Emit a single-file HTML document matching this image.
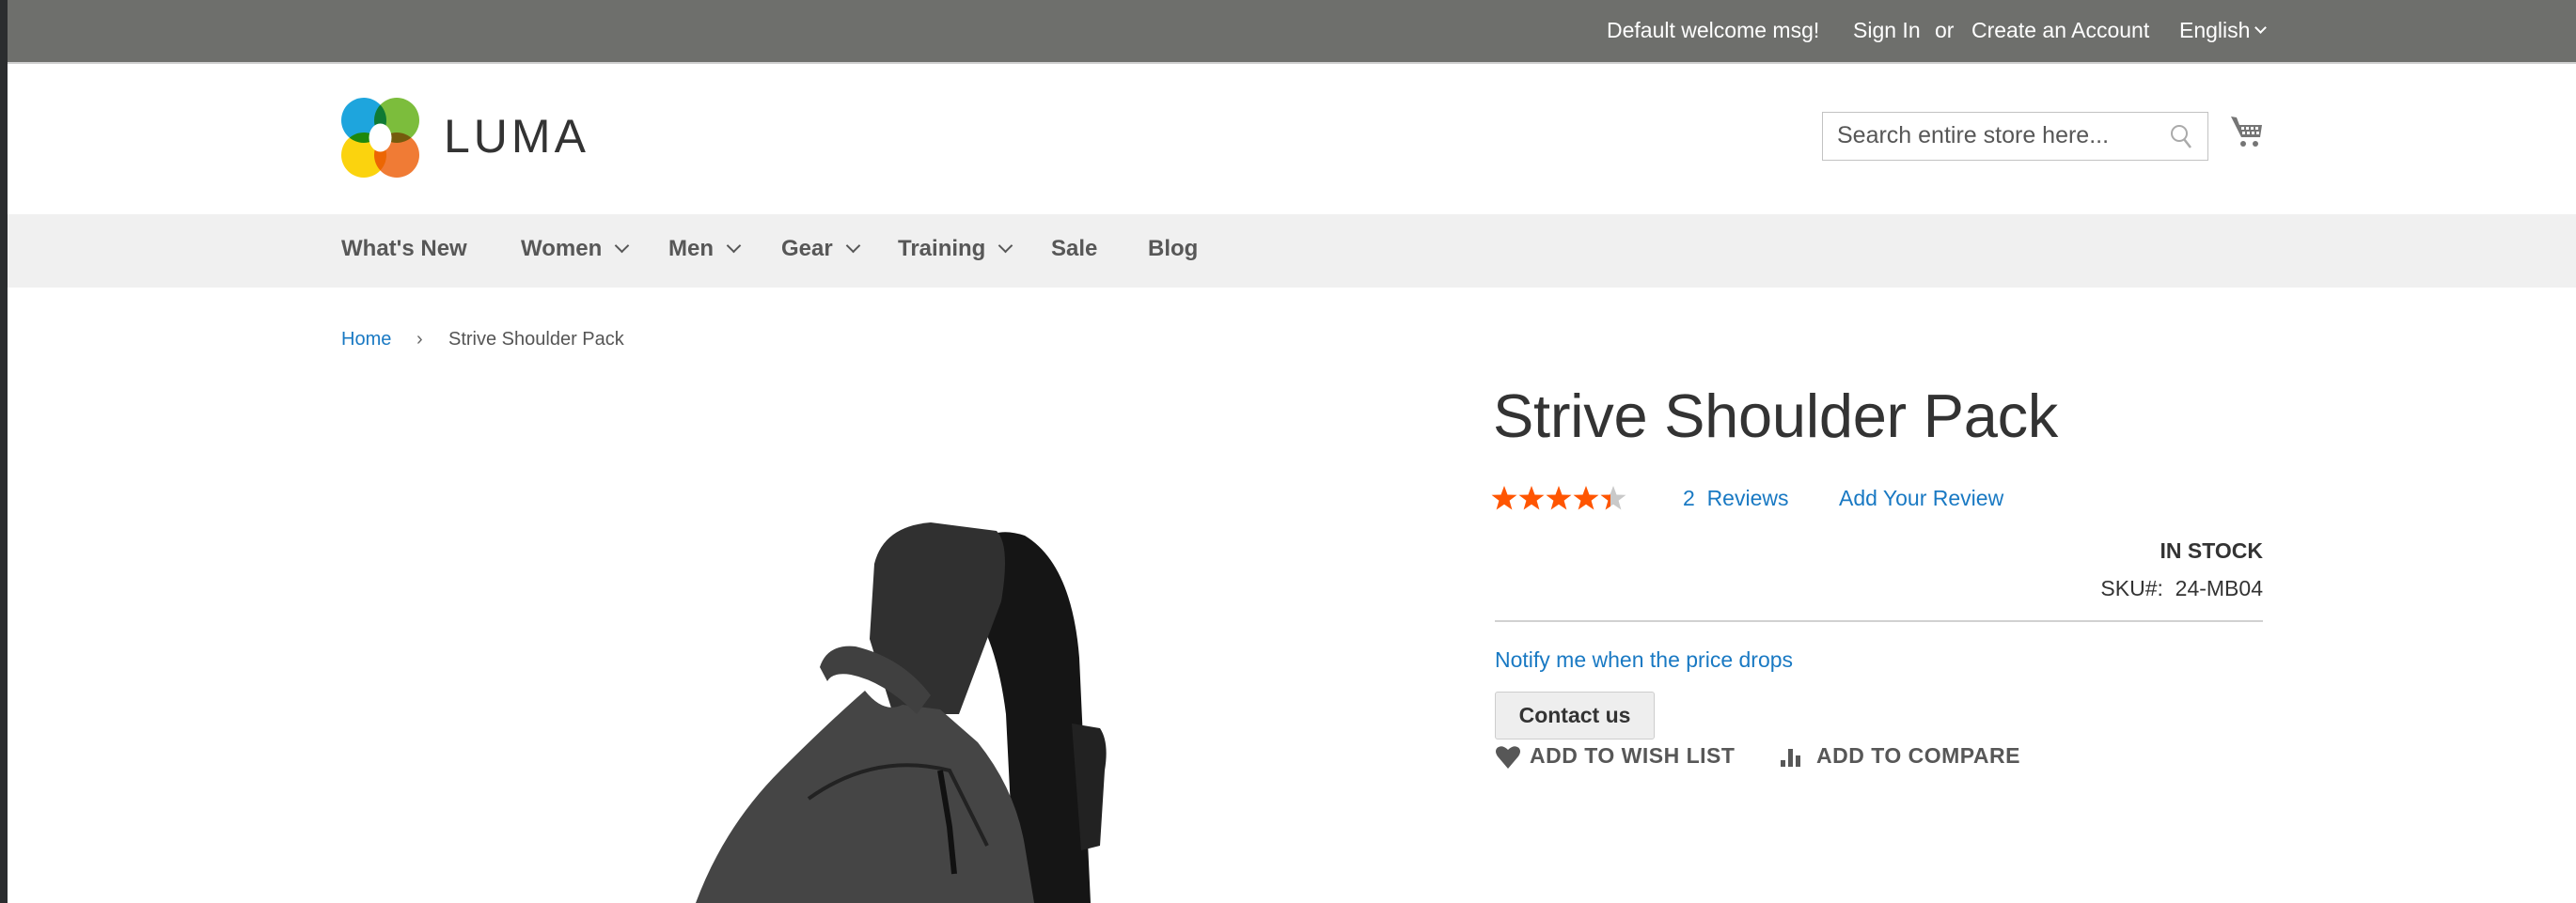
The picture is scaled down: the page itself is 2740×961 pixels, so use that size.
<!DOCTYPE html>
<html><head><meta charset="utf-8">
<style>
*{margin:0;padding:0;box-sizing:border-box}
html,body{width:2740px;height:961px;overflow:hidden;background:#fff;font-family:"Liberation Sans",sans-serif;color:#333}
.a{position:absolute;white-space:nowrap}
#side{position:absolute;left:0;top:0;width:8px;height:961px;background:#2b2d2f}
#top{position:absolute;left:8px;top:0;width:2732px;height:68px;background:#6e6f6c;border-bottom:2px solid #cfcfcf}
.tb{color:#fff;font-size:23px;top:19px}
#nav{position:absolute;left:8px;top:228px;width:2732px;height:78px;background:#f0f0f0}
.nv{font-size:24px;font-weight:bold;color:#575757;top:251px}
.chev{display:inline-block;width:11px;height:11px;border-right:2px solid #575757;border-bottom:2px solid #575757;transform:rotate(45deg);margin-left:16px;position:relative;top:-5px}
.lnk{color:#1979c3}
</style></head><body>
<div id="side"></div>
<div id="top"></div>
<div class="a tb" style="left:1709px">Default welcome msg!</div>
<div class="a tb" style="left:1971px">Sign In</div>
<div class="a tb" style="left:2058px">or</div>
<div class="a tb" style="left:2097px">Create an Account</div>
<div class="a tb" style="left:2318px">English<span style="display:inline-block;width:9px;height:9px;border-right:2px solid #fff;border-bottom:2px solid #fff;transform:rotate(45deg);margin-left:7px;position:relative;top:-6px"></span></div>

<!-- logo -->
<svg class="a" style="left:362px;top:103px" width="86" height="88" viewBox="0 0 86 88">
<ellipse cx="25" cy="25" rx="24" ry="24" fill="#1ea5dd"/>
<ellipse cx="60" cy="25" rx="24" ry="24" fill="#7cbd3c" style="mix-blend-mode:multiply"/>
<ellipse cx="25" cy="62" rx="24" ry="24" fill="#fbd30e" style="mix-blend-mode:multiply"/>
<ellipse cx="60" cy="62" rx="24" ry="24" fill="#f07b35" style="mix-blend-mode:multiply"/>
<ellipse cx="42.5" cy="43.5" rx="12" ry="15" fill="#fff"/>
</svg>
<div class="a" style="left:472px;top:116px;font-size:50px;letter-spacing:4px;color:#333">LUMA</div>

<!-- search -->
<div class="a" style="left:1938px;top:119px;width:411px;height:52px;border:1px solid #c2c2c2;background:#fff"></div>
<div class="a" style="left:1954px;top:130px;font-size:25px;color:#575757">Search entire store here...</div>
<svg class="a" style="left:2307px;top:131px" width="28" height="30" viewBox="0 0 28 30"><circle cx="11" cy="11" r="8" fill="none" stroke="#aaa" stroke-width="2"/><line x1="16" y1="17" x2="23" y2="26" stroke="#aaa" stroke-width="2.5"/></svg>
<svg class="a" style="left:2370px;top:120px" width="40" height="40" viewBox="0 0 40 40" fill="#757575">
<path d="M3 4 L9 5 L12 13 L36 13 L34 26 L14 26 Z"/>
<g fill="#fff"><rect x="14" y="15" width="3" height="3"/><rect x="19" y="15" width="3" height="3"/><rect x="24" y="15" width="3" height="3"/><rect x="29" y="15" width="3" height="3"/><rect x="15" y="20" width="3" height="3"/><rect x="20" y="20" width="3" height="3"/><rect x="25" y="20" width="3" height="3"/><rect x="30" y="20" width="3" height="3"/></g>
<circle cx="16" cy="33" r="3"/><circle cx="29" cy="33" r="3"/></svg>

<div id="nav"></div>
<div class="a nv" style="left:363px">What's New</div>
<div class="a nv" style="left:554px">Women<span class="chev"></span></div>
<div class="a nv" style="left:711px">Men<span class="chev"></span></div>
<div class="a nv" style="left:831px">Gear<span class="chev"></span></div>
<div class="a nv" style="left:955px">Training<span class="chev"></span></div>
<div class="a nv" style="left:1118px">Sale</div>
<div class="a nv" style="left:1221px">Blog</div>

<div class="a lnk" style="left:363px;top:350px;font-size:20px">Home</div>
<div class="a" style="left:443px;top:350px;font-size:20px;color:#666">&#8250;</div>
<div class="a" style="left:477px;top:350px;font-size:20px;color:#555">Strive Shoulder Pack</div>

<!-- bag -->
<svg class="a" style="left:700px;top:540px" width="520" height="421" viewBox="700 540 520 421">
<path d="M1030 600 Q1045 555 1090 570 Q1140 600 1148 700 L1160 961 L1080 961 L1070 760 Q1060 680 1030 640 Z" fill="#151515"/>
<path d="M1140 770 L1170 775 Q1180 790 1175 820 L1170 900 L1150 905 Z" fill="#222"/>
<path d="M930 600 Q940 560 990 556 L1060 565 Q1075 580 1065 640 L1020 760 L950 760 L925 680 Z" fill="#303030"/>
<path d="M920 735 Q940 760 960 750 L1000 755 L1040 790 Q1080 840 1090 900 L1100 961 L740 961 Q770 880 830 820 Q880 770 920 735 Z" fill="#454545"/>
<path d="M872 710 Q880 685 910 688 Q960 700 990 740 L975 760 Q940 725 905 718 Q885 715 880 725 Z" fill="#404040"/>
<path d="M860 850 Q930 800 1010 820 L1050 900" fill="none" stroke="#222" stroke-width="4"/>
<path d="M1000 820 L1010 880 L1015 930" stroke="#111" stroke-width="6" fill="none"/>
</svg>

<!-- product info -->
<div class="a" style="left:1588px;top:405px;font-size:65px;color:#333;letter-spacing:-0.3px">Strive Shoulder Pack</div>
<svg class="a" style="left:1586px;top:516px" width="150" height="30" viewBox="0 0 150 30">
<defs><clipPath id="h"><rect x="116" y="0" width="11" height="30"/></clipPath></defs>
<g id="s"><polygon points="14,1 17.5,10.5 27.5,10.7 19.6,16.8 22.4,26.5 14,20.8 5.6,26.5 8.4,16.8 0.5,10.7 10.5,10.5" fill="#ff5501"/></g>
<use href="#s" x="29"/><use href="#s" x="58"/><use href="#s" x="87"/>
<polygon transform="translate(116 0)" points="14,1 17.5,10.5 27.5,10.7 19.6,16.8 22.4,26.5 14,20.8 5.6,26.5 8.4,16.8 0.5,10.7 10.5,10.5" fill="#c9c9c9"/>
<g clip-path="url(#h)"><polygon transform="translate(116 0)" points="14,1 17.5,10.5 27.5,10.7 19.6,16.8 22.4,26.5 14,20.8 5.6,26.5 8.4,16.8 0.5,10.7 10.5,10.5" fill="#ff5501"/></g>
</svg>
<div class="a lnk" style="left:1790px;top:517px;font-size:23px">2&nbsp; Reviews</div>
<div class="a lnk" style="left:1956px;top:517px;font-size:23px">Add Your Review</div>
<div class="a" style="right:333px;top:573px;font-size:23px;font-weight:bold">IN STOCK</div>
<div class="a" style="right:333px;top:613px;font-size:23px">SKU#:&nbsp; 24-MB04</div>
<div class="a" style="left:1590px;top:660px;width:817px;height:2px;background:#d1d1d1"></div>
<div class="a lnk" style="left:1590px;top:689px;font-size:23px">Notify me when the price drops</div>
<div class="a" style="left:1590px;top:736px;width:170px;height:51px;background:#eee;border:1px solid #cdcdcd;border-radius:3px;font-size:23px;font-weight:bold;color:#333;text-align:center;line-height:49px">Contact us</div>
<svg class="a" style="left:1590px;top:793px" width="28" height="26" viewBox="0 0 28 26"><path d="M14 25 L3 12 Q-1 6 3 2.5 Q8 -1 14 5 Q20 -1 25 2.5 Q29 6 25 12 Z" fill="#575757"/></svg>
<div class="a" style="left:1627px;top:791px;font-size:23px;font-weight:bold;color:#575757;letter-spacing:0.5px">ADD TO WISH LIST</div>
<svg class="a" style="left:1894px;top:793px" width="26" height="24" viewBox="0 0 26 24" fill="#575757"><rect x="0" y="16" width="5" height="7"/><rect x="8" y="4" width="5" height="19"/><rect x="16" y="11" width="5" height="12"/></svg>
<div class="a" style="left:1932px;top:791px;font-size:23px;font-weight:bold;color:#575757;letter-spacing:0.5px">ADD TO COMPARE</div>
</body></html>
